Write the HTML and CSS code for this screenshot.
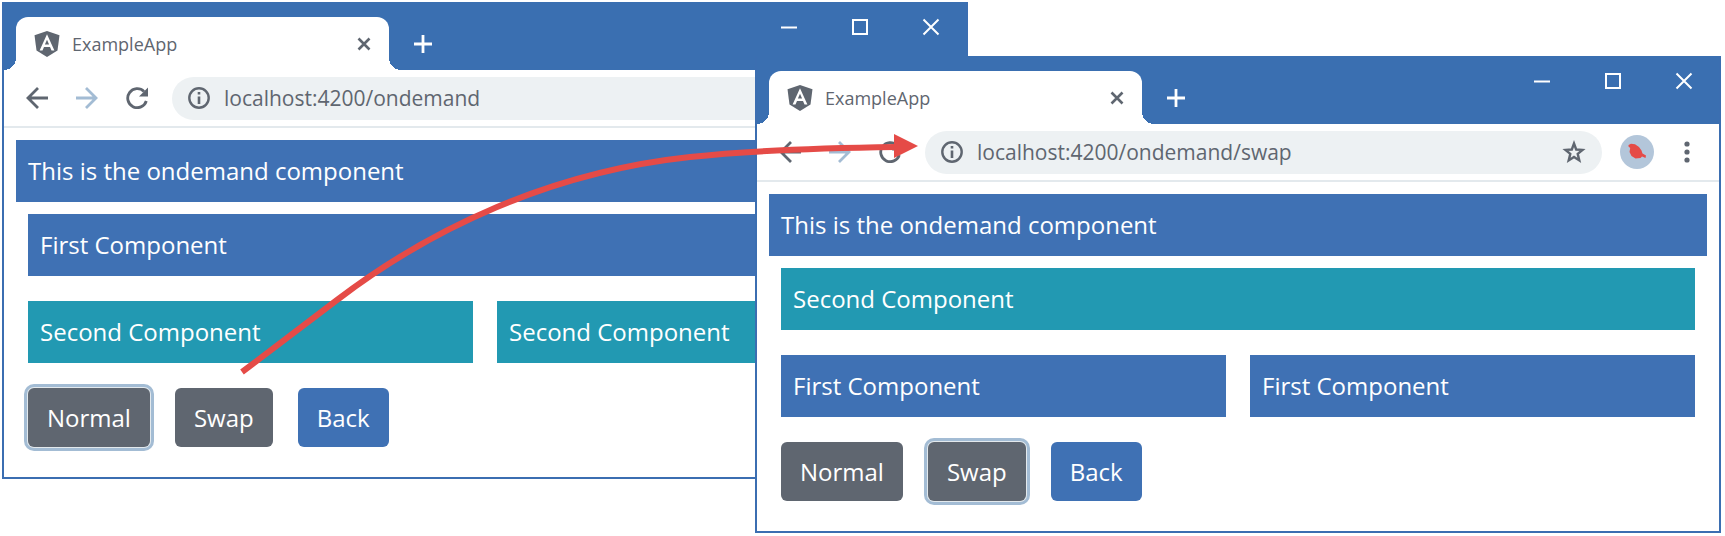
FILE: index.html
```html
<!DOCTYPE html>
<html lang="en">
<head>
<meta charset="utf-8">
<title>ExampleApp</title>
<link rel="stylesheet" href="styles.css">
</head>
<body>
<svg class="symbols" aria-hidden="true">
  <symbol id="shield" viewBox="0 0 26 26"><path fill="#5f6670" d="M13 0 25.500 4.200 23.500 19.500 13 26 2.500 19.500 .5 4.200Z"/><path fill="#fff" fill-rule="evenodd" d="M13 3.200 20.400 19.600H17.500L16 15.900H10L8.500 19.600H5.600ZM13 8.700 10.900 13.600H15.100Z"/></symbol>
  <symbol id="cross" viewBox="0 0 14 14"><path d="M1.500 1.500 12.500 12.500M12.500 1.500 1.500 12.500" stroke="currentColor" stroke-width="2.600"/></symbol>
  <symbol id="plus" viewBox="0 0 20 20"><path d="M10 1V19M1 10H19" stroke="currentColor" stroke-width="2.800"/></symbol>
  <symbol id="min" viewBox="0 0 18 18"><path d="M1 9.500H17" stroke="currentColor" stroke-width="2"/></symbol>
  <symbol id="max" viewBox="0 0 18 18"><path d="M2 2H16V16H2Z" fill="none" stroke="currentColor" stroke-width="2"/></symbol>
  <symbol id="close" viewBox="0 0 18 18"><path d="M1.500 1.500 16.500 16.500M16.500 1.500 1.500 16.500" stroke="currentColor" stroke-width="2"/></symbol>
  <symbol id="back" viewBox="0 0 22 22"><path d="M22 11H2M12 1 2 11 12 21" fill="none" stroke="currentColor" stroke-width="2.800"/></symbol>
  <symbol id="forward" viewBox="0 0 22 22"><path d="M0 11H20M10 1 20 11 10 21" fill="none" stroke="currentColor" stroke-width="2.800"/></symbol>
  <symbol id="reload" viewBox="0 0 22 22"><path d="M20.300 14A9.500 9.500 0 1 1 18 4.500" fill="none" stroke="currentColor" stroke-width="2.800"/><path d="M22 .5V9.500H13Z" fill="currentColor"/></symbol>
  <symbol id="info" viewBox="0 0 22 22"><circle cx="11" cy="11" r="9.700" fill="none" stroke="currentColor" stroke-width="2.400"/><path d="M11 9.500V17M11 5V7.600" stroke="currentColor" stroke-width="2.600"/></symbol>
  <symbol id="star" viewBox="0 0 24 24"><path d="M12 3.500 14.200 9.500 20.500 9.900 15.700 13.900 17.300 20.400 12 17 6.700 20.400 8.300 13.900 3.500 9.900 9.800 9.500Z" fill="none" stroke="currentColor" stroke-width="2.400"/></symbol>
  <symbol id="bird" viewBox="0 0 34 34"><circle cx="17" cy="17" r="17" fill="#b3c6da"/><path fill="#e54b47" d="M8.500 10 11 8.700 15 9.200 19 12 21.500 15.500 22.500 18.500 26 20.500 25.500 23 22 21.500 20.500 23 15.500 23.500 11.500 21 9.500 17 10.200 13 8.500 11.500Z"/></symbol>
  <symbol id="dots" viewBox="0 0 22 22"><g fill="currentColor"><circle cx="11" cy="3" r="2.600"/><circle cx="11" cy="11" r="2.600"/><circle cx="11" cy="19" r="2.600"/></g></symbol>
</svg>

<main class="desktop">
  <section class="window window-rear" aria-label="Normal view">
    <header class="titlebar">
      <div class="tab">
        <svg class="favicon" aria-hidden="true"><use href="#shield"/></svg>
        <span class="tab-title">ExampleApp</span>
        <button class="icon-button" aria-label="Close tab"><svg class="icon-tab"><use href="#cross"/></svg></button>
      </div>
      <button class="icon-button new-tab" aria-label="New tab"><svg class="icon-plus"><use href="#plus"/></svg></button>
      <div class="controls">
        <button class="control" aria-label="Minimize"><svg class="icon-control"><use href="#min"/></svg></button>
        <button class="control" aria-label="Maximize"><svg class="icon-control"><use href="#max"/></svg></button>
        <button class="control" aria-label="Close"><svg class="icon-control"><use href="#close"/></svg></button>
      </div>
    </header>
    <nav class="toolbar">
      <div class="history">
        <button class="icon-button" aria-label="Back"><svg class="icon"><use href="#back"/></svg></button>
        <button class="icon-button faded" aria-label="Forward"><svg class="icon"><use href="#forward"/></svg></button>
        <button class="icon-button" aria-label="Reload"><svg class="icon"><use href="#reload"/></svg></button>
      </div>
      <div class="omnibox">
        <svg class="icon" aria-hidden="true"><use href="#info"/></svg>
        <input class="address" type="text" aria-label="Address" value="localhost:4200/ondemand">
      </div>
    </nav>
    <div class="page">
      <div class="bar first">This is the ondemand component</div>
      <div class="outlet">
        <div class="bar first">First Component</div>
        <div class="pair">
          <div class="bar second">Second Component</div>
          <div class="bar second">Second Component</div>
        </div>
        <div class="actions">
          <button class="btn selected">Normal</button>
          <button class="btn">Swap</button>
          <button class="btn primary">Back</button>
        </div>
      </div>
    </div>
  </section>

  <section class="window window-front" aria-label="Swap view">
    <header class="titlebar">
      <div class="tab">
        <svg class="favicon" aria-hidden="true"><use href="#shield"/></svg>
        <span class="tab-title">ExampleApp</span>
        <button class="icon-button" aria-label="Close tab"><svg class="icon-tab"><use href="#cross"/></svg></button>
      </div>
      <button class="icon-button new-tab" aria-label="New tab"><svg class="icon-plus"><use href="#plus"/></svg></button>
      <div class="controls">
        <button class="control" aria-label="Minimize"><svg class="icon-control"><use href="#min"/></svg></button>
        <button class="control" aria-label="Maximize"><svg class="icon-control"><use href="#max"/></svg></button>
        <button class="control" aria-label="Close"><svg class="icon-control"><use href="#close"/></svg></button>
      </div>
    </header>
    <nav class="toolbar">
      <div class="history">
        <button class="icon-button" aria-label="Back"><svg class="icon"><use href="#back"/></svg></button>
        <button class="icon-button faded" aria-label="Forward"><svg class="icon"><use href="#forward"/></svg></button>
        <button class="icon-button" aria-label="Reload"><svg class="icon"><use href="#reload"/></svg></button>
      </div>
      <div class="omnibox">
        <svg class="icon" aria-hidden="true"><use href="#info"/></svg>
        <input class="address" type="text" aria-label="Address" value="localhost:4200/ondemand/swap">
        <button class="icon-button" aria-label="Bookmark"><svg class="icon-star"><use href="#star"/></svg></button>
      </div>
      <div class="profile">
        <button class="icon-button" aria-label="Profile"><svg class="avatar"><use href="#bird"/></svg></button>
        <button class="icon-button" aria-label="Menu"><svg class="icon"><use href="#dots"/></svg></button>
      </div>
    </nav>
    <div class="page">
      <div class="bar first">This is the ondemand component</div>
      <div class="outlet">
        <div class="bar second">Second Component</div>
        <div class="pair">
          <div class="bar first">First Component</div>
          <div class="bar first">First Component</div>
        </div>
        <div class="actions">
          <button class="btn">Normal</button>
          <button class="btn selected">Swap</button>
          <button class="btn primary">Back</button>
        </div>
      </div>
    </div>
  </section>

  <svg class="arrow" viewBox="0 0 1725 536" preserveAspectRatio="xMinYMin meet" aria-hidden="true">
    <path d="M242 372 337 300C430 229 550 172 690 157C755 150 820 148 896 147" fill="none" stroke="#e54b47" stroke-width="6"/>
    <path d="M894 134 918 146 894 158Z" fill="#e54b47"/>
  </svg>
</main>
</body>
</html>
```
FILE: styles.css
```css
* { box-sizing: border-box; }

body {
  margin: 0;
  background: #fff;
  font-family: "Open Sans", "Noto Sans", sans-serif;
}

button, input { font-family: inherit; }

.symbols { display: none; }

.desktop {
  position: relative;
  min-height: 100vh;
  overflow: hidden;
}

.window {
  position: absolute;
  width: 56%;
  background: #fff;
  border: 2px solid #3b6eb1;
  border-top: 0;
}

.window-rear { left: 2px; top: 2px; }
.window-front { right: 4px; top: 56px; }

.titlebar {
  display: flex;
  align-items: flex-end;
  height: 68px;
  padding-left: 12px;
  background: #3a6fb1;
  color: #fff;
}

.tab {
  position: relative;
  display: flex;
  align-items: center;
  gap: 12px;
  flex: 0 1 373px;
  height: 53px;
  padding: 0 18px;
  background: #fff;
  border-radius: 12px 12px 0 0;
  color: #5f6670;
}

.tab::before, .tab::after {
  content: "";
  position: absolute;
  bottom: 0;
  width: 12px;
  height: 12px;
}

.tab::before {
  right: 100%;
  background: radial-gradient(circle at 0 0, transparent 12px, #fff 12px);
}

.tab::after {
  left: 100%;
  background: radial-gradient(circle at 100% 0, transparent 12px, #fff 12px);
}

.tab-title {
  flex: 1;
  font-size: 18px;
  line-height: 24px;
}

.icon-button, .control {
  display: grid;
  place-items: center;
  padding: 0;
  border: 0;
  background: none;
  color: inherit;
}

.favicon { width: 26px; height: 26px; }
.icon { width: 22px; height: 22px; flex: none; }
.icon-tab { width: 14px; height: 14px; }
.icon-plus { width: 20px; height: 20px; }
.icon-control { width: 18px; height: 18px; }
.icon-star { width: 24px; height: 24px; }
.avatar { width: 34px; height: 34px; }

.new-tab {
  height: 53px;
  margin-left: 24px;
}

.controls {
  display: flex;
  align-self: flex-start;
  margin-left: auto;
}

.control { width: 71px; height: 49px; }

.toolbar {
  display: flex;
  align-items: center;
  gap: 18px;
  height: 58px;
  padding: 0 21px 0 22px;
  border-bottom: 2px solid #e3e9ed;
  color: #5f6670;
}

.history {
  display: flex;
  gap: 28px;
  padding-right: 6px;
}

.faded { color: #a3bcd4; }

.omnibox {
  display: flex;
  align-items: center;
  gap: 14px;
  flex: 1;
  height: 43px;
  padding: 0 16px;
  border-radius: 22px;
  background: #edf1f3;
}

.address {
  flex: 1;
  min-width: 0;
  padding: 0;
  border: 0;
  outline: 0;
  background: none;
  color: #5f6670;
  font-size: 21px;
  line-height: 28px;
}

.profile {
  display: flex;
  align-items: center;
  gap: 22px;
}

.page { padding: 12px; }

.bar {
  padding: 13px 12px;
  color: #fff;
  font-size: 24px;
  line-height: 36px;
}

.first { background: #3f71b4; }
.second { background: #2299b2; }

.outlet {
  display: grid;
  gap: 25px;
  padding: 12px 12px 18px;
}

.pair {
  display: grid;
  grid-template-columns: 1fr 1fr;
  gap: 24px;
}

.actions {
  display: flex;
  gap: 25px;
}

.btn {
  padding: 12px 19px;
  border: 0;
  border-radius: 6px;
  background: #5f6670;
  color: #fff;
  font-size: 24px;
  line-height: 35px;
}

.primary { background: #3f71b4; }
.selected { box-shadow: 0 0 0 1px #e3e9ed, 0 0 0 4px #a3bcd4; }

.arrow {
  position: absolute;
  left: 0;
  top: 0;
  width: 100%;
  pointer-events: none;
}
```
